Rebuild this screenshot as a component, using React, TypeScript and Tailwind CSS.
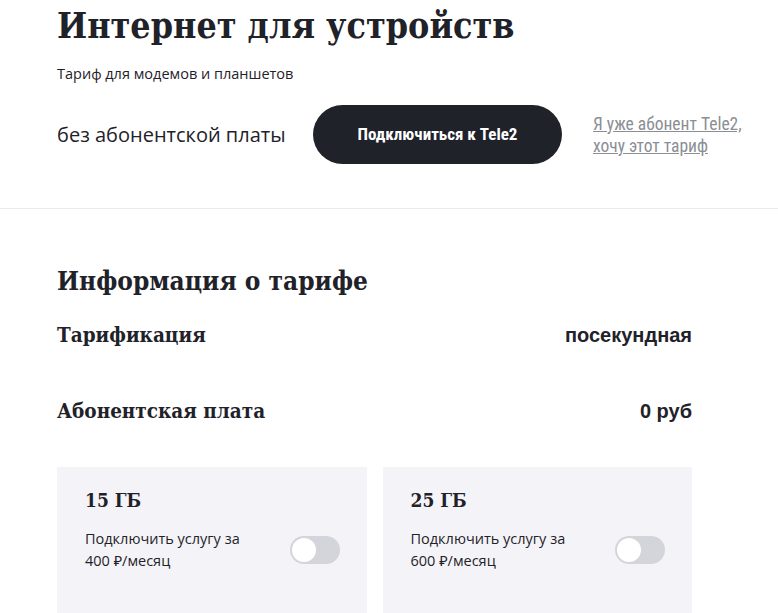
const serif = {
  fontFamily: '"DejaVu Serif Condensed", "DejaVu Serif", serif',
  fontStretch: 'condensed',
};
const narrow = { fontFamily: '"Liberation Sans Narrow", "Roboto Condensed", Roboto, "Liberation Sans", sans-serif' };
const text = { fontFamily: '"Open Sans", "Noto Sans", sans-serif' };
const bold = { fontFamily: '"Liberation Sans", Arial, sans-serif' };

const Toggle = () => (
  <div className="relative h-[28px] w-[50px] shrink-0 rounded-full bg-[#d3d5db]">
    <div className="absolute left-[2px] top-[2px] h-[24px] w-[24px] rounded-full bg-white" />
  </div>
);

const PackageCard = ({ gb, price }: { gb: string; price: string }) => (
  <div className="h-[146px] bg-[#f4f4f8] pl-[28px] pr-[27px] pt-[19px]">
    <h3 className="text-[19px] font-bold leading-[28px] text-[#1f2229]" style={serif}>
      {gb}
    </h3>
    <div className="mt-[14px] flex items-center justify-between">
      <p className="text-[14.5px] leading-[22px] text-[#1f2229]" style={text}>
        Подключить услугу за
        <br />
        {price}
      </p>
      <Toggle />
    </div>
  </div>
);

export default function App() {
  return (
    <div className="min-h-[613px] w-[778px] overflow-hidden bg-white text-[#1f2229]" style={text}>
      {/* Hero */}
      <section className="border-b border-[#ebebeb] px-[57px] pb-[44px]">
        <h1 className="pt-[4px] text-[35.5px] font-bold leading-[44px]" style={serif}>
          Интернет для устройств
        </h1>
        <p className="mt-[16px] text-[14.5px] leading-[20px]">Тариф для модемов и планшетов</p>
        <div className="mt-[21px] flex items-center">
          <span className="w-[256px] shrink-0 text-[20px]">без абонентской платы</span>
          <button
            className="h-[59px] w-[249px] shrink-0 rounded-full bg-[#1f2229] text-[17px] font-bold text-white"
            style={narrow}
          >
            Подключиться к Tele2
          </button>
          <a
            href="#"
            className="ml-[31px] shrink-0 whitespace-nowrap text-[17.5px] leading-[22px] text-[#8b8e94] underline"
            style={narrow}
          >
            Я уже абонент Tele2,
            <br />
            хочу этот тариф
          </a>
        </div>
      </section>

      {/* Tariff info */}
      <section className="px-[57px] pt-[52px]">
        <h2 className="text-[26px] font-bold leading-[40px]" style={serif}>
          Информация о тарифе
        </h2>
        <div className="mr-[29px] mt-[20px] flex h-[28px] items-center justify-between">
          <span className="text-[20.5px] font-bold" style={serif}>Тарификация</span>
          <span className="text-[20px] font-bold" style={bold}>посекундная</span>
        </div>
        <div className="mr-[29px] mt-[48px] flex h-[28px] items-center justify-between">
          <span className="text-[20.5px] font-bold" style={serif}>Абонентская плата</span>
          <span className="text-[20px] font-bold" style={bold}>0 руб</span>
        </div>
        <div className="mr-[29px] mt-[42px] grid grid-cols-2 gap-[16px]">
          <PackageCard gb="15 ГБ" price="400 ₽/месяц" />
          <PackageCard gb="25 ГБ" price="600 ₽/месяц" />
        </div>
      </section>
    </div>
  );
}
